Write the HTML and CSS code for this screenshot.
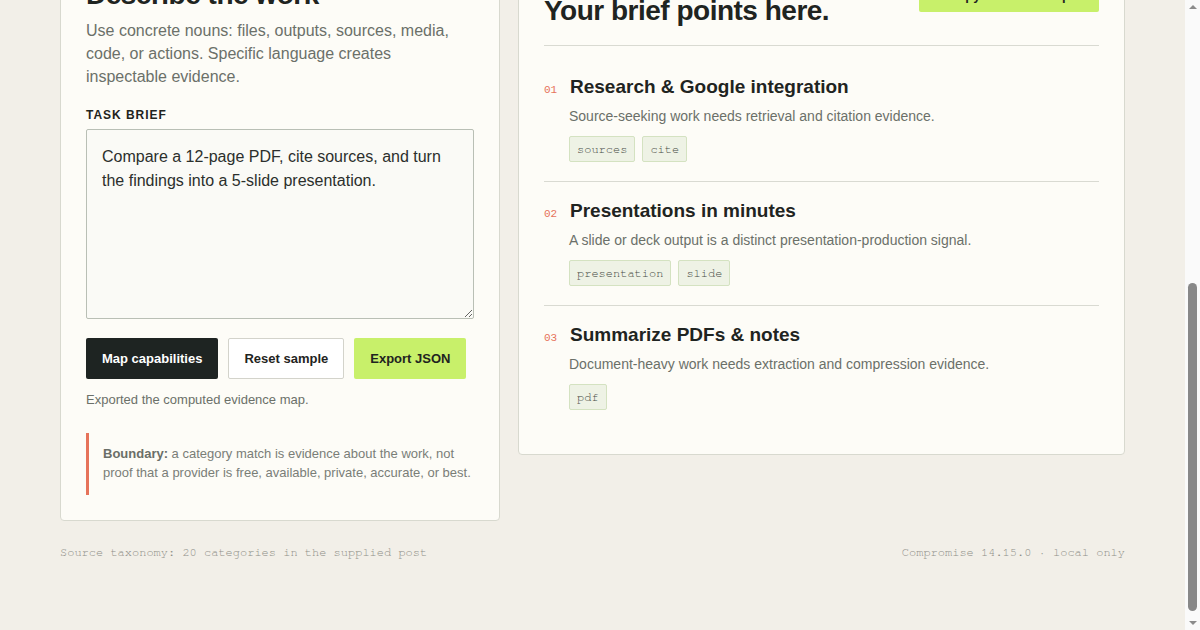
FILE: index.html
```html
<!DOCTYPE html>
<html lang="en">
<head>
<meta charset="utf-8">
<title>Compromise — capability mapper</title>
<link rel="stylesheet" href="styles.css">
</head>
<body>
<div class="scroller" id="scroller">
<div class="page">
  <header class="topbar">
    <div class="brand"><span class="brand-mark"></span>Compromise</div>
    <nav class="nav">
      <a href="#work">Mapper</a>
      <a href="#brief">Brief</a>
      <a href="#taxonomy">Taxonomy</a>
    </nav>
  </header>

  <section class="hero">
    <p class="eyebrow">Capability mapper</p>
    <h1>Describe a task. See which kinds of help it actually calls for.</h1>
    <p class="lead">Paste a plain-language brief and the mapper points out the categories your words give evidence for, with the signals that triggered each one.</p>
    <ul class="stats">
      <li><strong>20</strong> categories</li>
      <li><strong>0</strong> network calls</li>
      <li><strong>1</strong> JSON export</li>
    </ul>
  </section>

  <main class="workspace">
    <section class="card input-card" id="work">
      <h2 class="card-title">Describe the work</h2>
      <p class="intro">Use concrete nouns: files, outputs, sources, media, code, or actions. Specific language creates inspectable evidence.</p>
      <label class="field-label" for="brief-text">Task brief</label>
      <textarea id="brief-text" class="brief-input">Compare a 12-page PDF, cite sources, and turn the findings into a 5-slide presentation.</textarea>
      <div class="actions">
        <button class="btn btn-dark" type="button">Map capabilities</button>
        <button class="btn btn-plain" type="button">Reset sample</button>
        <button class="btn btn-lime" type="button">Export JSON</button>
      </div>
      <p class="status">Exported the computed evidence map.</p>
      <p class="boundary"><strong>Boundary:</strong> a category match is evidence about the work, not proof that a provider is free, available, private, accurate, or best.</p>
    </section>

    <section class="card result-card" id="brief">
      <div class="result-head">
        <div>
          <p class="result-eyebrow">Evidence map</p>
          <h2 class="card-title">Your brief points here.</h2>
        </div>
        <button class="btn btn-lime btn-copy" type="button">Copy evidence map</button>
      </div>

      <ol class="brief-list">
        <li class="brief-item">
          <span class="num">01</span>
          <h3 class="item-title">Research &amp; Google integration</h3>
          <p class="item-desc">Source-seeking work needs retrieval and citation evidence.</p>
          <div class="tags"><span class="tag">sources</span><span class="tag">cite</span></div>
        </li>
        <li class="brief-item">
          <span class="num">02</span>
          <h3 class="item-title">Presentations in minutes</h3>
          <p class="item-desc">A slide or deck output is a distinct presentation-production signal.</p>
          <div class="tags"><span class="tag">presentation</span><span class="tag">slide</span></div>
        </li>
        <li class="brief-item">
          <span class="num">03</span>
          <h3 class="item-title">Summarize PDFs &amp; notes</h3>
          <p class="item-desc">Document-heavy work needs extraction and compression evidence.</p>
          <div class="tags"><span class="tag">pdf</span></div>
        </li>
      </ol>
    </section>
  </main>

  <footer class="footer" id="taxonomy">
    <span>Source taxonomy: 20 categories in the supplied post</span>
    <span>Compromise 14.15.0 · local only</span>
  </footer>
</div>
</div>

<!-- window scroll rail, drawn at the end of the document -->
<div class="rail" aria-hidden="true">
  <span class="rail-arrow rail-up"></span>
  <span class="rail-thumb"></span>
  <span class="rail-arrow rail-down"></span>
</div>
<script src="script.js"></script>
</body>
</html>
```

FILE: styles.css
```css
* {
  box-sizing: border-box;
}

html,
body {
  height: 100%;
  margin: 0;
  overflow: hidden;
  background: #f2efe8;
}

body {
  font-family: "Liberation Sans", Arial, sans-serif;
  color: #1f2421;
}

/* the document scrolls inside this box; the right gutter holds the rail */
.scroller {
  height: 100%;
  overflow-y: scroll;
  padding-right: 15px;
}

.rail {
  position: fixed;
  top: 0;
  right: 0;
  bottom: 0;
  width: 15px;
  background: #fafafa;
  display: flex;
  flex-direction: column;
  align-items: center;
  padding: 5px 0;
}

.rail-arrow {
  display: block;
  flex: none;
  width: 0;
  height: 0;
  border-left: 4px solid transparent;
  border-right: 4px solid transparent;
}

.rail-up {
  border-bottom: 4px solid #8c8c8c;
}

.rail-down {
  border-top: 4px solid #8c8c8c;
}

.rail-thumb {
  display: block;
  flex: none;
  width: 9px;
  height: 328px;
  margin: auto 0 10px;
  background: #888888;
  border-radius: 5px;
}

.page {
  max-width: 1065px;
  margin: 0 auto;
  padding: 0 0 70px;
}

/* top bar */
.topbar {
  display: flex;
  align-items: center;
  justify-content: space-between;
  height: 64px;
  border-bottom: 1px solid #dcdad1;
}

.brand {
  display: flex;
  align-items: center;
  gap: 10px;
  font-weight: 700;
  font-size: 16px;
}

.brand-mark {
  width: 14px;
  height: 14px;
  background: #c8f06a;
  border: 2px solid #1f2421;
}

.nav {
  display: flex;
  gap: 24px;
}

.nav a {
  color: #5f645d;
  font-size: 14px;
  text-decoration: none;
}

/* hero */
.hero {
  padding: 64px 0 48px;
}

.eyebrow {
  margin: 0 0 14px;
  font-family: "FreeMono", "Nimbus Mono L", "Liberation Mono", monospace;
  font-size: 12px;
  line-height: 16px;
  text-transform: uppercase;
  letter-spacing: 0.08em;
  color: #e6735a;
}

.hero h1 {
  margin: 0;
  max-width: 820px;
  font-size: 48px;
  line-height: 54px;
  letter-spacing: -1px;
}

.lead {
  margin: 16px 0 0;
  max-width: 640px;
  font-size: 17px;
  line-height: 26px;
  color: #6b7069;
}

.stats {
  display: flex;
  gap: 12px;
  margin: 28px 0 0;
  padding: 0;
  list-style: none;
}

.stats li {
  padding: 8px 12px;
  border: 1px solid #d8d9cf;
  border-radius: 2px;
  background: #fdfcf7;
  font-size: 13px;
  line-height: 16px;
  color: #6b7069;
}

.stats strong {
  color: #1f2421;
}

/* two-column workspace */
.workspace {
  display: grid;
  grid-template-columns: 440px 1fr;
  gap: 18px;
  align-items: start;
}

.card {
  background: #fdfcf7;
  border: 1px solid #d8d9cf;
  border-radius: 4px;
  padding: 25px;
}

.card-title {
  margin: 0;
  font-size: 28px;
  line-height: 32px;
  letter-spacing: -0.5px;
  font-weight: 700;
}

.input-card .card-title {
  margin-bottom: 8px;
}

.intro {
  margin: 0 0 19px;
  font-size: 16px;
  line-height: 23px;
  color: #6b7069;
}

.field-label {
  display: block;
  margin-bottom: 6px;
  font-size: 12px;
  line-height: 16px;
  font-weight: 700;
  letter-spacing: 0.08em;
  text-transform: uppercase;
}

.brief-input {
  display: block;
  width: 100%;
  height: 190px;
  padding: 15px;
  font-family: "Liberation Sans", Arial, sans-serif;
  font-size: 16px;
  line-height: 24px;
  color: #2b2f2c;
  background: #fafaf6;
  border: 1px solid #b9bfb5;
  border-radius: 2px;
  resize: vertical;
}

.actions {
  display: flex;
  gap: 10px;
  margin-top: 19px;
}

.btn {
  font-family: "Liberation Sans", Arial, sans-serif;
  font-size: 13px;
  line-height: 15px;
  font-weight: 700;
  padding: 12px 15px;
  border: 1px solid transparent;
  border-radius: 2px;
  cursor: pointer;
}

.btn-dark {
  background: #1e2422;
  color: #ffffff;
}

.btn-plain {
  background: #ffffff;
  border-color: #d3d3cb;
  color: #1f2421;
}

.btn-lime {
  background: #c8f06a;
  color: #1f2421;
}

.status {
  margin: 12px 0 24px;
  font-size: 13px;
  line-height: 18px;
  color: #6b7069;
}

.boundary {
  margin: 0;
  padding: 11px 0 13px 14px;
  border-left: 3px solid #e6735a;
  font-size: 13px;
  line-height: 19px;
  color: #7a7e77;
}

.boundary strong {
  color: #6a6e68;
}

/* evidence list */
.result-head {
  display: flex;
  justify-content: space-between;
  align-items: flex-start;
  padding-bottom: 18px;
  border-bottom: 1px solid #d9dad2;
  margin-bottom: 12px;
}

.result-eyebrow {
  margin: 0;
  font-family: "FreeMono", "Nimbus Mono L", "Liberation Mono", monospace;
  font-size: 11px;
  line-height: 16px;
  text-transform: uppercase;
  letter-spacing: 0.08em;
  color: #e6735a;
}

.btn-copy {
  padding: 8px 28px;
}

.brief-list {
  margin: 0;
  padding: 0;
  list-style: none;
}

.brief-item {
  display: grid;
  grid-template-columns: 14px 1fr;
  column-gap: 12px;
  align-items: baseline;
  padding: 17px 0 19px;
  border-bottom: 1px solid #d9dad2;
}

.brief-item:last-child {
  border-bottom: 0;
}

.num {
  grid-column: 1;
  grid-row: 1;
  font-family: "Liberation Mono", "Courier New", monospace;
  font-size: 11px;
  color: #e6735a;
}

.item-title {
  grid-column: 2;
  grid-row: 1;
  margin: 0;
  font-size: 19px;
  line-height: 24px;
  font-weight: 700;
}

.item-desc {
  grid-column: 2;
  margin: 7px 0 10px -1px;
  font-size: 14px;
  line-height: 20px;
  color: #6b7069;
}

.tags {
  grid-column: 2;
  display: flex;
  gap: 7px;
  margin-left: -1px;
}

.tag {
  padding: 4px 7px;
  font-family: "FreeMono", "Nimbus Mono L", "Liberation Mono", monospace;
  font-size: 12px;
  line-height: 16px;
  color: #454a44;
  background: #eef2e5;
  border: 1px solid #d4e2c1;
  border-radius: 2px;
}

/* footer */
.footer {
  display: flex;
  justify-content: space-between;
  margin-top: 23px;
  font-family: "FreeMono", "Nimbus Mono L", "Liberation Mono", monospace;
  font-size: 12px;
  line-height: 16px;
  color: #8e8e87;
}
```

FILE: script.js
```js
// Open the page on the workspace and its footer.
function showWorkspace() {
  var box = document.getElementById("scroller");
  box.scrollTop = box.scrollHeight;
}
showWorkspace();
window.addEventListener("load", showWorkspace);
```
